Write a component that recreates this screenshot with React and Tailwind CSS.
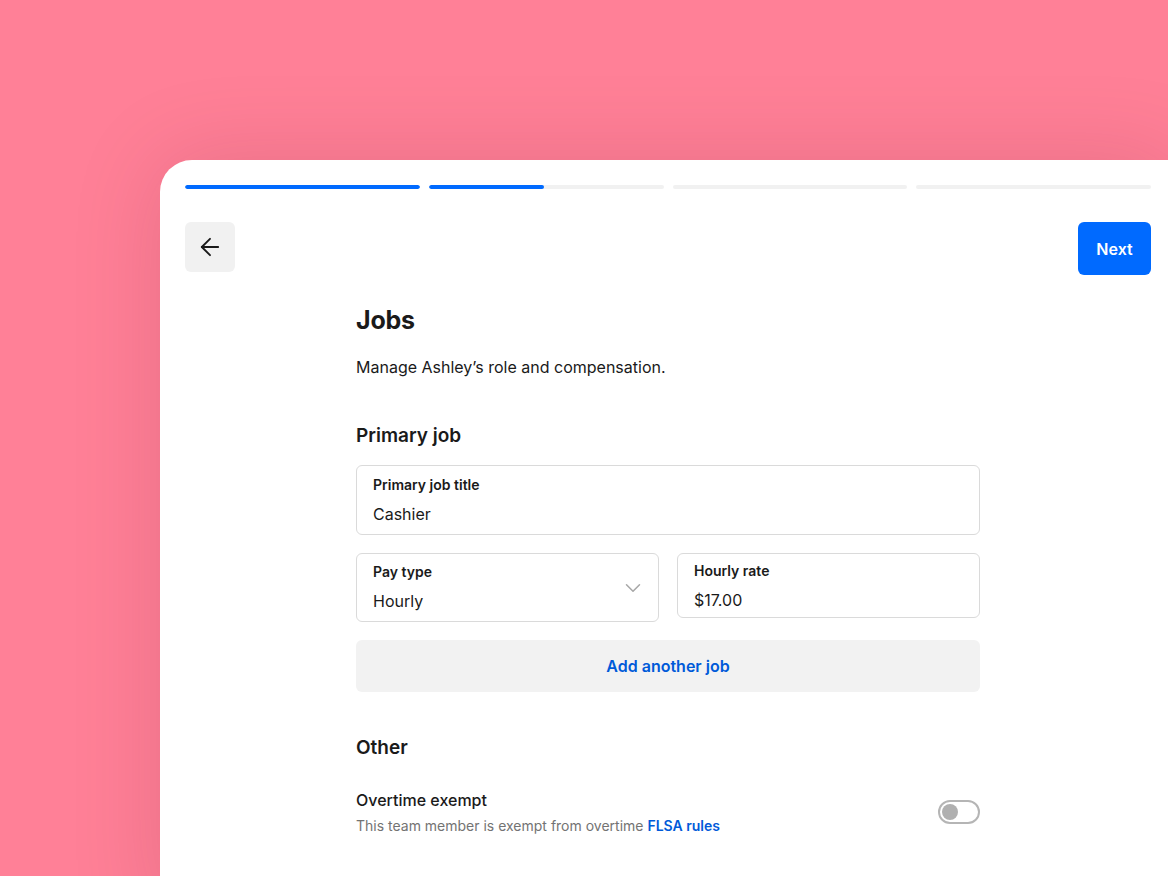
import { ArrowLeft, ChevronDown } from "lucide-react";

const segments = [100, 49, 0, 0];

export default function App() {
  return (
    <div className="h-[876px] w-[1168px] overflow-hidden bg-[#ff8097] pl-[160px] pt-[160px] font-['Inter',sans-serif] text-[#1a1a1a]">
      <div className="h-[760px] w-[1016px] rounded-tl-[32px] bg-white px-[25px] pt-[25px] shadow-[0_0_90px_rgba(110,20,50,0.16)]">
        {/* progress */}
        <div className="flex gap-[9px]">
          {segments.map((pct, i) => (
            <div key={i} className="h-1 flex-1 overflow-hidden rounded-full bg-[#f1f1f1]">
              <div className="h-full rounded-full bg-[#006aff]" style={{ width: `${pct}%` }} />
            </div>
          ))}
        </div>

        {/* nav */}
        <div className="mt-[33px] flex items-start justify-between">
          <button className="flex h-[50px] w-[50px] items-center justify-center rounded-md bg-[#f1f1f1]">
            <ArrowLeft size={28} strokeWidth={1.6} className="text-[#1a1a1a]" />
          </button>
          <button className="h-[53px] w-[73px] rounded-md bg-[#006aff] text-base font-semibold text-white">
            Next
          </button>
        </div>

        {/* content */}
        <div className="mx-auto mt-[29px] w-[624px]">
          <h1 className="text-[25px] font-bold leading-[32px] tracking-[-0.2px]">Jobs</h1>
          <p className="mt-[19px] text-base leading-6">Manage Ashley’s role and compensation.</p>

          <h2 className="mt-[45px] text-[19px] font-semibold leading-6">Primary job</h2>

          <div className="mt-[17px] h-[70px] rounded-md border border-[#dadada] px-4 pt-[9px]">
            <div className="text-sm font-semibold leading-5">Primary job title</div>
            <div className="mt-[7px] text-base leading-6">Cashier</div>
          </div>

          <div className="mt-[18px] flex items-start justify-between">
            <div className="flex h-[69px] w-[303px] items-center justify-between rounded-md border border-[#dadada] pl-4 pr-[12px]">
              <div>
                <div className="text-sm font-semibold leading-5">Pay type</div>
                <div className="mt-[7px] text-base leading-6">Hourly</div>
              </div>
              <ChevronDown size={26} strokeWidth={1.4} className="text-[#a8a8a8]" />
            </div>
            <div className="h-[65px] w-[303px] rounded-md border border-[#dadada] px-4 pt-[7px]">
              <div className="text-sm font-semibold leading-5">Hourly rate</div>
              <div className="mt-[7px] text-base leading-6">$17.00</div>
            </div>
          </div>

          <button className="mt-[18px] h-[52px] w-full rounded-md bg-[#f2f2f2] text-base font-semibold text-[#005ad9]">
            Add another job
          </button>

          <h2 className="mt-[44px] text-[19px] font-semibold leading-6">Other</h2>

          <div className="mt-[28px] flex items-center justify-between">
            <div>
              <div className="text-base font-medium leading-6">Overtime exempt</div>
              <div className="mt-[4px] text-sm leading-5 text-[#737373]">
                This team member is exempt from overtime{" "}
                <span className="font-semibold text-[#005ad9]">FLSA rules</span>
              </div>
            </div>
            <div className="flex h-6 w-[42px] items-center rounded-full border-2 border-[#b5b5b5] px-[2px]">
              <div className="h-4 w-4 rounded-full bg-[#b0b0b0]" />
            </div>
          </div>
        </div>
      </div>
    </div>
  );
}
